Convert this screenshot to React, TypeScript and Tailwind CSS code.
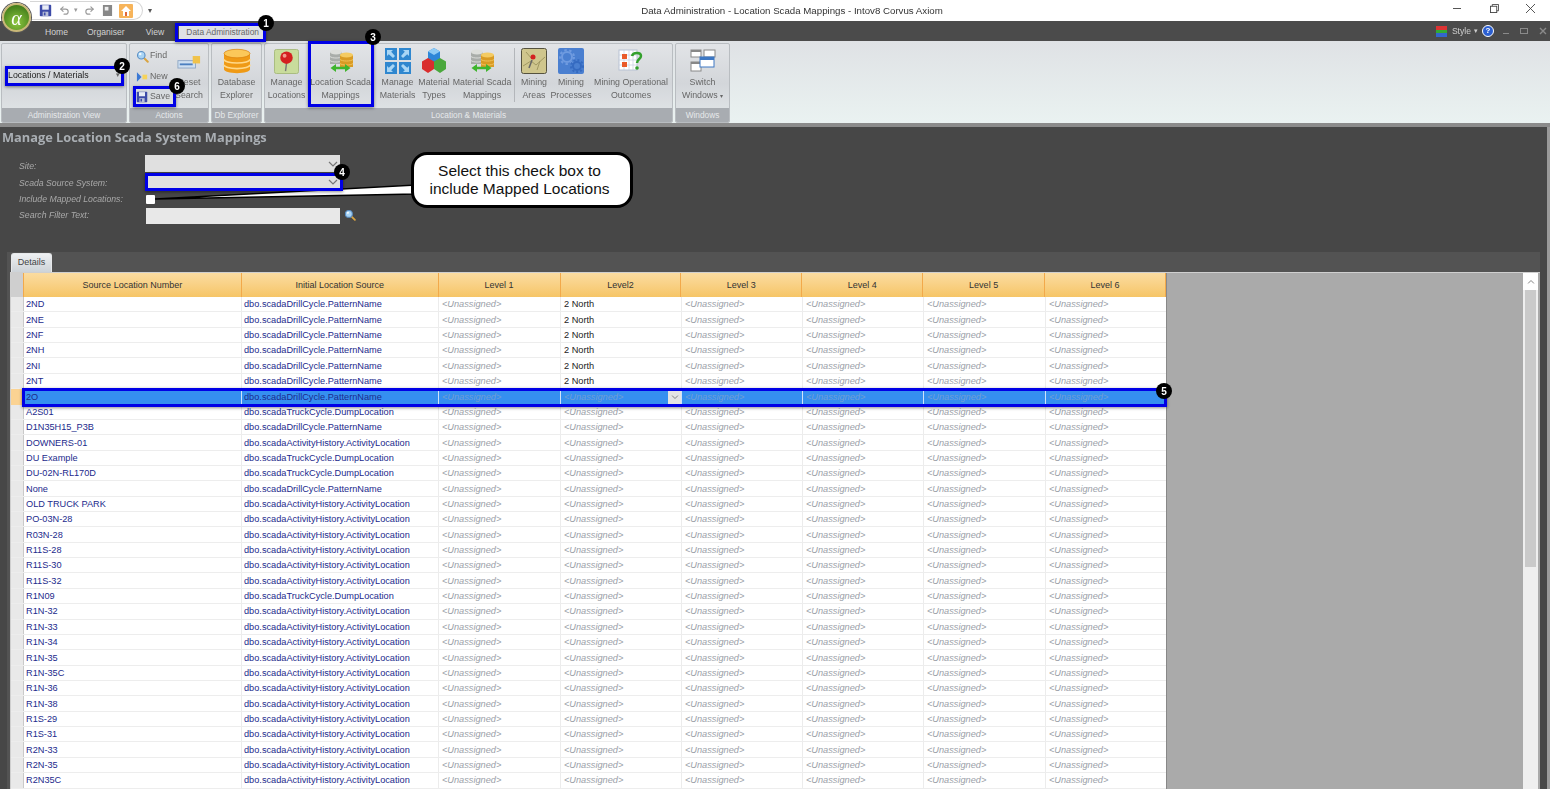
import { type ReactNode } from 'react'
import { Undo2, Redo2 } from 'lucide-react'

const FONT = "font-['Liberation_Sans',Arial,sans-serif]"

const ROWS: [string, string, string?][] = [
  ['2ND', 'dbo.scadaDrillCycle.PatternName', '2 North'],
  ['2NE', 'dbo.scadaDrillCycle.PatternName', '2 North'],
  ['2NF', 'dbo.scadaDrillCycle.PatternName', '2 North'],
  ['2NH', 'dbo.scadaDrillCycle.PatternName', '2 North'],
  ['2NI', 'dbo.scadaDrillCycle.PatternName', '2 North'],
  ['2NT', 'dbo.scadaDrillCycle.PatternName', '2 North'],
  ['2O', 'dbo.scadaDrillCycle.PatternName'],
  ['A2S01', 'dbo.scadaTruckCycle.DumpLocation'],
  ['D1N35H15_P3B', 'dbo.scadaDrillCycle.PatternName'],
  ['DOWNERS-01', 'dbo.scadaActivityHistory.ActivityLocation'],
  ['DU Example', 'dbo.scadaTruckCycle.DumpLocation'],
  ['DU-02N-RL170D', 'dbo.scadaTruckCycle.DumpLocation'],
  ['None', 'dbo.scadaDrillCycle.PatternName'],
  ['OLD TRUCK PARK', 'dbo.scadaActivityHistory.ActivityLocation'],
  ['PO-03N-28', 'dbo.scadaActivityHistory.ActivityLocation'],
  ['R03N-28', 'dbo.scadaActivityHistory.ActivityLocation'],
  ['R11S-28', 'dbo.scadaActivityHistory.ActivityLocation'],
  ['R11S-30', 'dbo.scadaActivityHistory.ActivityLocation'],
  ['R11S-32', 'dbo.scadaActivityHistory.ActivityLocation'],
  ['R1N09', 'dbo.scadaTruckCycle.DumpLocation'],
  ['R1N-32', 'dbo.scadaActivityHistory.ActivityLocation'],
  ['R1N-33', 'dbo.scadaActivityHistory.ActivityLocation'],
  ['R1N-34', 'dbo.scadaActivityHistory.ActivityLocation'],
  ['R1N-35', 'dbo.scadaActivityHistory.ActivityLocation'],
  ['R1N-35C', 'dbo.scadaActivityHistory.ActivityLocation'],
  ['R1N-36', 'dbo.scadaActivityHistory.ActivityLocation'],
  ['R1N-38', 'dbo.scadaActivityHistory.ActivityLocation'],
  ['R1S-29', 'dbo.scadaActivityHistory.ActivityLocation'],
  ['R1S-31', 'dbo.scadaActivityHistory.ActivityLocation'],
  ['R2N-33', 'dbo.scadaActivityHistory.ActivityLocation'],
  ['R2N-35', 'dbo.scadaActivityHistory.ActivityLocation'],
  ['R2N35C', 'dbo.scadaActivityHistory.ActivityLocation'],
]

const LEVELS = ['Level 1', 'Level2', 'Level 3', 'Level 4', 'Level 5', 'Level 6']
const LEVEL_WIDTHS = ['w-[122px]', 'w-[121px]', 'w-[121px]', 'w-[121px]', 'w-[122px]', 'w-[121px]']

function Badge({ n, className }: { n: number; className: string }) {
  return (
    <div className={`absolute z-30 flex h-[16px] w-[16px] items-center justify-center rounded-full bg-black text-[10px] font-bold text-white ${className}`}>
      {n}
    </div>
  )
}

function Mark({ className }: { className: string }) {
  return <div className={`pointer-events-none absolute z-20 border-[3px] border-[#0000e6] shadow-[0_1px_3px_rgba(0,0,0,0.45)] ${className}`} />
}

function Chevron({ className = '' }: { className?: string }) {
  return (
    <svg viewBox="0 0 10 6" className={`h-[6px] w-[10px] ${className}`} fill="none" stroke="#777" strokeWidth="1.2">
      <path d="M1 1l4 4 4-4" />
    </svg>
  )
}

function SaveIcon({ size = 14 }: { size?: number }) {
  return (
    <svg viewBox="0 0 16 16" width={size} height={size}>
      <rect x="1" y="1" width="14" height="14" rx="1" fill="#3d4ba8" />
      <rect x="4" y="1.5" width="8" height="5.5" fill="#e8ecf6" />
      <rect x="4.5" y="9.5" width="7" height="5.5" fill="#b8bfd8" />
      <rect x="6" y="10.5" width="2" height="3.5" fill="#3d4ba8" />
    </svg>
  )
}

function Magnifier({ size = 14 }: { size?: number }) {
  return (
    <svg viewBox="0 0 16 16" width={size} height={size}>
      <path d="M9.5 9.5l5 5" stroke="#d9a441" strokeWidth="2.4" strokeLinecap="round" />
      <circle cx="6.5" cy="6.5" r="4.6" fill="#a9d4f5" stroke="#5b8fc4" strokeWidth="1.4" />
      <circle cx="5.2" cy="5" r="1.5" fill="#f2fafe" />
    </svg>
  )
}

function DbIcon() {
  return (
    <svg viewBox="0 0 28 28" width="28" height="26" preserveAspectRatio="none">
      <path d="M1 6v17c0 2.500 5.800 4.200 13 4.200s13-1.700 13-4.200V6z" fill="#ef9a16" />
      <ellipse cx="14" cy="6" rx="13" ry="4.600" fill="#fbc85a" stroke="#d87f0b" strokeWidth=".7" />
      <path d="M1 12c0 2.500 5.800 4.200 13 4.200S27 14.500 27 12M1 18c0 2.500 5.800 4.200 13 4.200S27 20.500 27 18" fill="none" stroke="#ffd98a" strokeWidth="1.700" />
    </svg>
  )
}

function PinIcon() {
  return (
    <svg viewBox="0 0 26 26" width="25" height="25">
      <rect x="0.500" y="0.500" width="25" height="25" rx="2" fill="#c9dc9c" stroke="#a8ba7e" />
      <path d="M13 15l-1 8" stroke="#777" strokeWidth="1.500" />
      <circle cx="13" cy="9" r="6.500" fill="#d42020" />
      <circle cx="11" cy="7" r="2" fill="#f29a8d" />
    </svg>
  )
}

function ScadaIcon() {
  return (
    <svg viewBox="0 0 28 24" width="28" height="24">
      <rect x="3" y="3" width="12" height="12" fill="#a9ada9" />
      <ellipse cx="9" cy="3" rx="6" ry="2.500" fill="#dcdeda" />
      <path d="M3 7.500c2 2 10 2 12 0M3 11.500c2 2 10 2 12 0" stroke="#d9dbd7" fill="none" />
      <rect x="13" y="6" width="13" height="12" fill="#d99b24" />
      <ellipse cx="19.500" cy="6" rx="6.500" ry="2.500" fill="#f4cb62" />
      <path d="M13 10.500c2 2 11 2 13 0M13 14.500c2 2 11 2 13 0" stroke="#f0c25a" fill="none" />
      <path d="M7 19h13" stroke="#3fb52d" strokeWidth="2.500" />
      <path d="M9 15l-5.500 4 5.500 4zM18 15l5.500 4-5.500 4z" fill="#3fb52d" />
    </svg>
  )
}

function ArrowsIcon() {
  return (
    <svg viewBox="0 0 26 26" width="26" height="26">
      <rect width="12" height="12" fill="#2f87cf" />
      <rect x="14" width="12" height="12" fill="#2f87cf" />
      <rect y="14" width="12" height="12" fill="#2f87cf" />
      <rect x="14" y="14" width="12" height="12" fill="#2f87cf" />
      <path d="M2 2h6L6.200 3.800 10 8 8 10 3.800 6.200 2 8zM24 2h-6l1.800 1.800L16 8l2 2 4.200-3.800L24 8zM2 24h6l-1.800-1.800L10 18l-2-2-4.200 3.800L2 18zM24 24h-6l1.800-1.800L16 18l2-2 4.200 3.800L24 18z" fill="#a9d6f5" />
    </svg>
  )
}

function CubesIcon() {
  return (
    <svg viewBox="0 0 28 28" width="28" height="28">
      <path d="M14 1l6 3.500v8l-6 3.500-6-3.500v-8z" fill="#2d86d8" />
      <path d="M14 1l6 3.500-6 3.500-6-3.500z" fill="#8fcbf5" />
      <path d="M8 11l6 3.500V22l-6 4-6-4v-7.500z" fill="#d92d2d" />
      <path d="M20 11l6 3.500V22l-6 4-6-4v-7.500z" fill="#4aa83c" />
    </svg>
  )
}

function AreaIcon() {
  return (
    <svg viewBox="0 0 26 26" width="26" height="26">
      <rect x="0.500" y="0.500" width="25" height="25" rx="2" fill="#cfc68d" stroke="#55523f" />
      <path d="M2 18l8-5 5 4 9-8M5 4l6 7M16 22l3-9" stroke="#a19862" fill="none" />
      <path d="M8 20l3-8" stroke="#666" strokeWidth="1.500" />
      <circle cx="12" cy="9" r="2.500" fill="#d42020" />
    </svg>
  )
}

function GearsIcon() {
  return (
    <svg viewBox="0 0 26 26" width="26" height="26">
      <rect width="26" height="26" rx="2" fill="#4a7fd0" />
      <circle cx="9" cy="9" r="5" fill="none" stroke="#6f9be0" strokeWidth="2" />
      <circle cx="9" cy="9" r="7" fill="none" stroke="#6f9be0" strokeWidth="2" strokeDasharray="2.500 2.500" />
      <circle cx="19" cy="18" r="4" fill="none" stroke="#356ac0" strokeWidth="2" />
      <circle cx="19" cy="18" r="6" fill="none" stroke="#356ac0" strokeWidth="2" strokeDasharray="2 2" />
    </svg>
  )
}

function OutcomesIcon() {
  return (
    <svg viewBox="0 0 28 26" width="28" height="26">
      <rect x="2" y="2" width="18" height="20" fill="#fff" stroke="#b8c2d4" />
      <path d="M2 7h18M2 12h18M2 17h18M7 2v20M12 2v20M16 2v20" stroke="#c6cfdf" strokeWidth=".7" />
      <rect x="5" y="6" width="5" height="5" fill="#ea5a2a" />
      <rect x="5" y="14" width="5" height="5" fill="#ea5a2a" />
      <path d="M15 8c1-4 9-4 9 0 0 3-4 3-4 7" fill="none" stroke="#33a02c" strokeWidth="2.500" />
      <circle cx="20" cy="20" r="1.800" fill="#33a02c" />
    </svg>
  )
}

function WindowsIcon() {
  return (
    <svg viewBox="0 0 26 24" width="26" height="24">
      <rect x="1" y="1" width="10" height="7" fill="#fff" stroke="#888" />
      <rect x="1" y="1" width="10" height="2" fill="#888" />
      <rect x="14" y="1" width="11" height="7" fill="#fff" stroke="#888" />
      <rect x="1" y="13" width="10" height="9" fill="#fff" stroke="#888" />
      <rect x="1" y="13" width="10" height="2" fill="#888" />
      <rect x="10" y="8" width="14" height="10" fill="#fff" stroke="#3e78c4" />
      <rect x="10" y="8" width="14" height="3" fill="#3e78c4" />
    </svg>
  )
}

function BigButton({ width, icon, lines }: { width: string; icon: ReactNode; lines: ReactNode[] }) {
  return (
    <div className={`flex ${width} shrink-0 flex-col items-center`}>
      <div className="flex h-[30px] items-center justify-center">{icon}</div>
      <div className="text-center text-[8.800px] leading-[13px] text-[#666]">
        {lines.map((l, i) => <div key={i} className="whitespace-nowrap">{l}</div>)}
      </div>
    </div>
  )
}

function Group({ label, width, children }: { label: string; width: string; children: ReactNode }) {
  return (
    <div className={`flex ${width} h-[80px] shrink-0 flex-col overflow-hidden rounded-[2px] border border-[#b9bdc1] bg-gradient-to-b from-[#e2e4e7] via-[#d3d6da] to-[#e3e7e9]`}>
      <div className="relative flex flex-1 pt-[2px]">{children}</div>
      <div className="h-[14px] bg-[#a8acb1] text-center text-[8.300px] leading-[14px] text-[#e6e8ea]">{label}</div>
    </div>
  )
}

function Ribbon() {
  return (
    <div className="flex h-[86px] items-start gap-[2px] border-b-[4px] border-[#8b8b8b] bg-gradient-to-b from-[#dfe2e5] to-[#eaf2f1] pl-[1px] pt-[2px]">
      <Group label="Administration View" width="w-[126px]">
        <div className="mx-[6px] mt-[22px] flex h-[15px] w-[112px] items-center justify-between text-[8.800px] text-[#222]">
          Locations / Materials
          <span className="text-[7px] text-[#666]">▾</span>
        </div>
      </Group>
      <Group label="Actions" width="w-[80px]">
        <div className="flex w-[45px] shrink-0 flex-col gap-[6.500px] pl-[6px] pt-[3px] text-[8.800px] text-[#666]">
          <div className="flex h-[14px] items-center gap-[1px]"><Magnifier size={13} />Find</div>
          <div className="flex h-[14px] items-center gap-[1px]">
            <svg viewBox="0 0 14 10" width="13" height="10"><path d="M1 0l5 5-5 5z" fill="#3a78d4" /><rect x="7" y="2.500" width="5" height="5" fill="#f6d35b" /></svg>
            New
          </div>
          <div className="flex h-[14px] items-center gap-[2px]"><SaveIcon size={12} />Save</div>
        </div>
        <div className="flex w-[28px] flex-col items-center pt-[9px] text-center text-[8.800px] leading-[13px] text-[#666]">
          <svg viewBox="0 0 26 16" width="24" height="15" className="mb-[6px]">
            <rect x="1" y="6" width="19" height="8" fill="#cfe0f2" stroke="#8da6c4" />
            <rect x="3" y="9" width="14" height="2" fill="#4b7fc0" />
            <rect x="17" y="1" width="8" height="8" fill="#f0c24a" />
          </svg>
          <div>Reset</div>
          <div>Search</div>
        </div>
      </Group>
      <Group label="Db Explorer" width="w-[51px]">
        <BigButton width="w-[49px]" icon={<DbIcon />} lines={['Database', 'Explorer']} />
      </Group>
      <Group label="Location & Materials" width="w-[409px]">
        <div className="w-[3px]" />
        <BigButton width="w-[37px]" icon={<PinIcon />} lines={['Manage', 'Locations']} />
        <div className="w-[3px]" />
        <BigButton width="w-[65px]" icon={<ScadaIcon />} lines={['Location Scada', 'Mappings']} />
        <div className="w-[7px]" />
        <BigButton width="w-[35px]" icon={<ArrowsIcon />} lines={['Manage', 'Materials']} />
        <div className="w-[2px]" />
        <BigButton width="w-[34px]" icon={<CubesIcon />} lines={['Material', 'Types']} />
        <div className="w-[2px]" />
        <BigButton width="w-[58px]" icon={<ScadaIcon />} lines={['Material Scada', 'Mappings']} />
        <div className="mx-[3px] mt-[2px] h-[54px] w-[1px] bg-[#b3b6ba]" />
        <BigButton width="w-[32px]" icon={<AreaIcon />} lines={['Mining', 'Areas']} />
        <div className="w-[2px]" />
        <BigButton width="w-[38px]" icon={<GearsIcon />} lines={['Mining', 'Processes']} />
        <div className="w-[4px]" />
        <BigButton width="w-[74px]" icon={<OutcomesIcon />} lines={['Mining Operational', 'Outcomes']} />
      </Group>
      <Group label="Windows" width="w-[55px]">
        <BigButton width="w-[53px]" icon={<WindowsIcon />} lines={['Switch', <>Windows <span className="text-[6px]">▾</span></>]} />
      </Group>
    </div>
  )
}

function TitleBar() {
  return (
    <div className="relative flex h-[21px] items-center bg-white">
      <div className="ml-[30px] flex h-[19px] w-[113px] items-center rounded-r-full border border-l-0 border-[#d6d6d6] pl-[9px]">
        <SaveIcon size={13} />
        <Undo2 size={11} strokeWidth={2.500} className="ml-[7px] text-[#9a9a9a]" />
        <span className="ml-[4px] text-[7px] text-[#999]">▾</span>
        <Redo2 size={11} strokeWidth={2.500} className="ml-[6px] text-[#9a9a9a]" />
        <svg viewBox="0 0 12 14" width="11" height="13" className="ml-[7px]"><rect x="1" y="1" width="10" height="12" fill="#888" /><rect x="3" y="3" width="4" height="4" fill="#eee" /></svg>
        <svg viewBox="0 0 14 14" width="14" height="14" className="ml-[6px]"><rect width="14" height="14" rx="1" fill="#f7b45a" /><path d="M7 2L2 7h2v5h6V7h2z" fill="#fff" /><rect x="6" y="8" width="2" height="4" fill="#e0683a" /></svg>
      </div>
      <span className="ml-[5px] text-[8px] text-[#555]">▾</span>
      <div className="absolute left-[34px] right-0 top-[4px] text-center text-[9.700px] text-[#333]">
        Data Administration - Location Scada Mappings - Intov8 Corvus Axiom
      </div>
      <div className="absolute right-[15px] top-[4px] flex items-center">
        <div className="h-[1px] w-[8px] bg-[#555]" />
        <svg viewBox="0 0 10 10" width="9" height="9" className="ml-[29px]" fill="none" stroke="#444"><rect x="0.500" y="2.500" width="7" height="7" /><path d="M2.500 2.500v-2h7v7h-2" /></svg>
        <svg viewBox="0 0 10 10" width="9" height="9" className="ml-[27px]" fill="none" stroke="#444"><path d="M0 0l10 10M10 0L0 10" /></svg>
      </div>
    </div>
  )
}

function TabBar() {
  return (
    <div className="relative flex h-[20px] items-end bg-[#4b4b4b] pl-[45px] text-[8.600px] text-[#d2d2d2]">
      <div className="flex h-[20px] items-center pt-[2px]">
        <span>Home</span>
        <span className="ml-[19px]">Organiser</span>
        <span className="ml-[21px]">View</span>
      </div>
      <div className="ml-[15px] flex h-[17px] w-[87px] items-center justify-center bg-[#dfe2e5] text-[8.400px] text-[#666]">Data Administration</div>
      <div className="absolute right-[3px] top-[4px] flex items-center text-[#cfcfcf]">
        <div className="mr-[5px] h-[11px] w-[11px] bg-[linear-gradient(#d33_33%,#3a3_33%,#3a3_66%,#36c_66%)]" />
        Style
        <span className="ml-[3px] text-[7px]">▾</span>
        <div className="ml-[4px] flex h-[12px] w-[12px] items-center justify-center rounded-full border border-white bg-[#2c5fd0] text-[8px] font-bold text-white">?</div>
        <div className="ml-[9px] mt-[5px] h-[1px] w-[6px] bg-[#8a8a8a]" />
        <div className="ml-[11px] h-[6px] w-[8px] border border-[#8a8a8a]" />
        <svg viewBox="0 0 8 8" width="8" height="8" className="ml-[11px]" fill="none" stroke="#8a8a8a" strokeWidth="1.400"><path d="M1 1l6 6M7 1L1 7" /></svg>
      </div>
    </div>
  )
}

function Filters() {
  const label = 'w-[126px] text-[8.700px] italic leading-[12px] text-[#a9a9a9]'
  return (
    <div className="flex h-[102px] flex-col pl-[19px] pt-[5px]">
      <div className="flex h-[18px] items-start">
        <div className={`${label} mt-[5px]`}>Site:</div>
        <div className="flex h-[17px] w-[195px] items-center justify-end bg-[#e0e0e0] pr-[2px]"><Chevron /></div>
      </div>
      <div className="flex h-[17px] items-start">
        <div className={`${label} mt-[4px]`}>Scada Source System:</div>
        <div className="flex h-[17px] w-[195px] items-center justify-end bg-[#e0e0e0] pr-[2px]"><Chevron /></div>
      </div>
      <div className="flex h-[17px] items-start">
        <div className={`${label} mt-[3px]`}>Include Mapped Locations:</div>
        <div className="ml-[1px] mt-[5px] h-[9px] w-[9px] rounded-[1px] bg-white" />
      </div>
      <div className="flex h-[17px] items-start">
        <div className={`${label} mt-[2px]`}>Search Filter Text:</div>
        <div className="ml-[1px] mt-[1px] h-[16px] w-[194px] bg-[#e8e8e8]" />
        <div className="ml-[4px] mt-[2px]"><Magnifier size={12} /></div>
      </div>
    </div>
  )
}

function GridHeader() {
  const cell = 'flex h-full items-center justify-center border-r border-[#f2a94a] pt-[2px] whitespace-nowrap'
  return (
    <div className="flex h-[24px] bg-gradient-to-b from-[#fbdca0] to-[#f6c566] text-[9px] text-[#333]">
      <div className="h-full w-[13px] border-r border-[#f2a94a] bg-[#cfcfcf]" />
      <div className={`${cell} w-[218px]`}>Source Location Number</div>
      <div className={`${cell} w-[197px]`}>Initial Location Source</div>
      {LEVELS.map((l, i) => <div key={l} className={`${cell} ${LEVEL_WIDTHS[i]}`}>{l}</div>)}
    </div>
  )
}

function GridRow({ row, selected }: { row: [string, string, string?]; selected: boolean }) {
  const cell = `flex h-full items-center overflow-hidden whitespace-nowrap border-r pt-[2px] ${selected ? 'border-[#cfe3fb]' : 'border-[#ececec]'}`
  const unassigned = selected ? 'italic text-[#6f9ed4]' : 'italic text-[#9aa0a8]'
  return (
    <div className={`flex h-[15.360px] text-[9.200px] ${selected ? 'bg-[#358ff0]' : 'border-b border-[#ededed] bg-white'}`}>
      <div className={`h-full w-[13px] shrink-0 border-r border-[#c9c9c9] ${selected ? 'bg-[#fbd393]' : 'bg-[#e9e9e9]'}`} />
      <div className={`${cell} w-[218px] shrink-0 pl-[2px] text-[#1c2a8c]`}>{row[0]}</div>
      <div className={`${cell} w-[197px] shrink-0 pl-[2px] text-[#1c2a8c]`}>{row[1]}</div>
      {LEVEL_WIDTHS.map((w, i) => (
        <div key={i} className={`${cell} ${w} relative shrink-0 pl-[3px] ${i === 1 && row[2] ? 'text-[#222]' : unassigned}`}>
          {i === 1 && row[2] ? row[2] : '<Unassigned>'}
          {selected && i === 1 && (
            <div className="absolute bottom-0 right-0 top-0 flex w-[13px] items-center justify-center bg-[#e4e4e4]"><Chevron className="scale-75" /></div>
          )}
        </div>
      ))}
    </div>
  )
}

function Callout() {
  return (
    <>
      <svg className="absolute left-[150px] top-[180px] z-10" width="270" height="26" viewBox="0 0 270 26">
        <path d="M5 19L266 5v9z" fill="#fff" stroke="#000" strokeWidth="1.500" />
      </svg>
      <div className="absolute left-[411px] top-[152px] z-10 flex h-[56px] w-[222px] flex-col items-center justify-center rounded-[16px] border-[3px] border-black bg-white pr-[5px] text-center text-[15.500px] leading-[18px] text-[#111]">
        <div>Select this check box to</div>
        <div>include Mapped Locations</div>
      </div>
    </>
  )
}

export default function App() {
  return (
    <div className={`relative h-[789px] w-[1550px] overflow-hidden bg-[#474747] ${FONT}`}>
      <div className="blur-[0.35px]">
        <TitleBar />
        <TabBar />
        <Ribbon />
        <div className="border-r-[3px] border-[#9a9a9a]">
          <div className="h-[23px] pl-[2px] pt-[1px] font-['Open_Sans',sans-serif] text-[12.800px] font-bold leading-[18px] text-[#a9aeb3]">
            Manage Location Scada System Mappings
          </div>
          <Filters />

          <div className="ml-[7px] w-[1533px] bg-[#535353] pl-[3px]">
            <div className="h-[20px] pl-[1px] pt-[1px]">
              <div className="flex h-[19px] w-[41px] items-center justify-center rounded-t-[3px] border border-b-0 border-[#e6e8ea] bg-gradient-to-b from-[#eef0f2] to-[#cdd3d8] text-[9px] text-[#444]">Details</div>
            </div>

            <div className="flex h-[518px] w-[1530px] border-l border-t border-[#cfcfcf] bg-[#aaaaaa]">
              <div className="w-[1156px] shrink-0 overflow-hidden border-r border-[#888]">
                <GridHeader />
                {ROWS.map((r, i) => <GridRow key={r[0]} row={r} selected={i === 6} />)}
              </div>
              <div className="ml-[356px] flex w-[15px] flex-col bg-[#efefef]">
                <div className="flex h-[17px] items-center justify-center bg-white"><Chevron className="rotate-180 scale-75" /></div>
                <div className="mx-[2px] h-[277px] bg-[#cacaca]" />
              </div>
            </div>
          </div>
        </div>
      </div>

      <div className="absolute left-[2px] top-[3px] z-10 flex h-[29px] w-[29px] items-center justify-center rounded-full border-[2px] border-[#c9b878] bg-[radial-gradient(circle_at_50%_70%,#8ec63f,#2e6b12)] font-['Liberation_Serif',serif] text-[20px] italic text-white ring-1 ring-[#555]">
        α
      </div>

      <Callout />

      <Mark className="left-[175px] top-[23px] h-[19px] w-[91px]" />
      <Mark className="left-[5px] top-[66px] h-[20px] w-[119px]" />
      <Mark className="left-[308px] top-[41px] h-[66px] w-[66px]" />
      <Mark className="left-[145px] top-[173px] h-[18px] w-[198px]" />
      <Mark className="left-[22px] top-[388px] h-[19px] w-[1145px]" />
      <Mark className="left-[133px] top-[86px] h-[21px] w-[43px]" />

      <Badge n={1} className="left-[258px] top-[15px]" />
      <Badge n={2} className="left-[114px] top-[58px]" />
      <Badge n={3} className="left-[365px] top-[29px]" />
      <Badge n={4} className="left-[334px] top-[164px]" />
      <Badge n={5} className="left-[1156px] top-[383px]" />
      <Badge n={6} className="left-[169px] top-[78px]" />
    </div>
  )
}
